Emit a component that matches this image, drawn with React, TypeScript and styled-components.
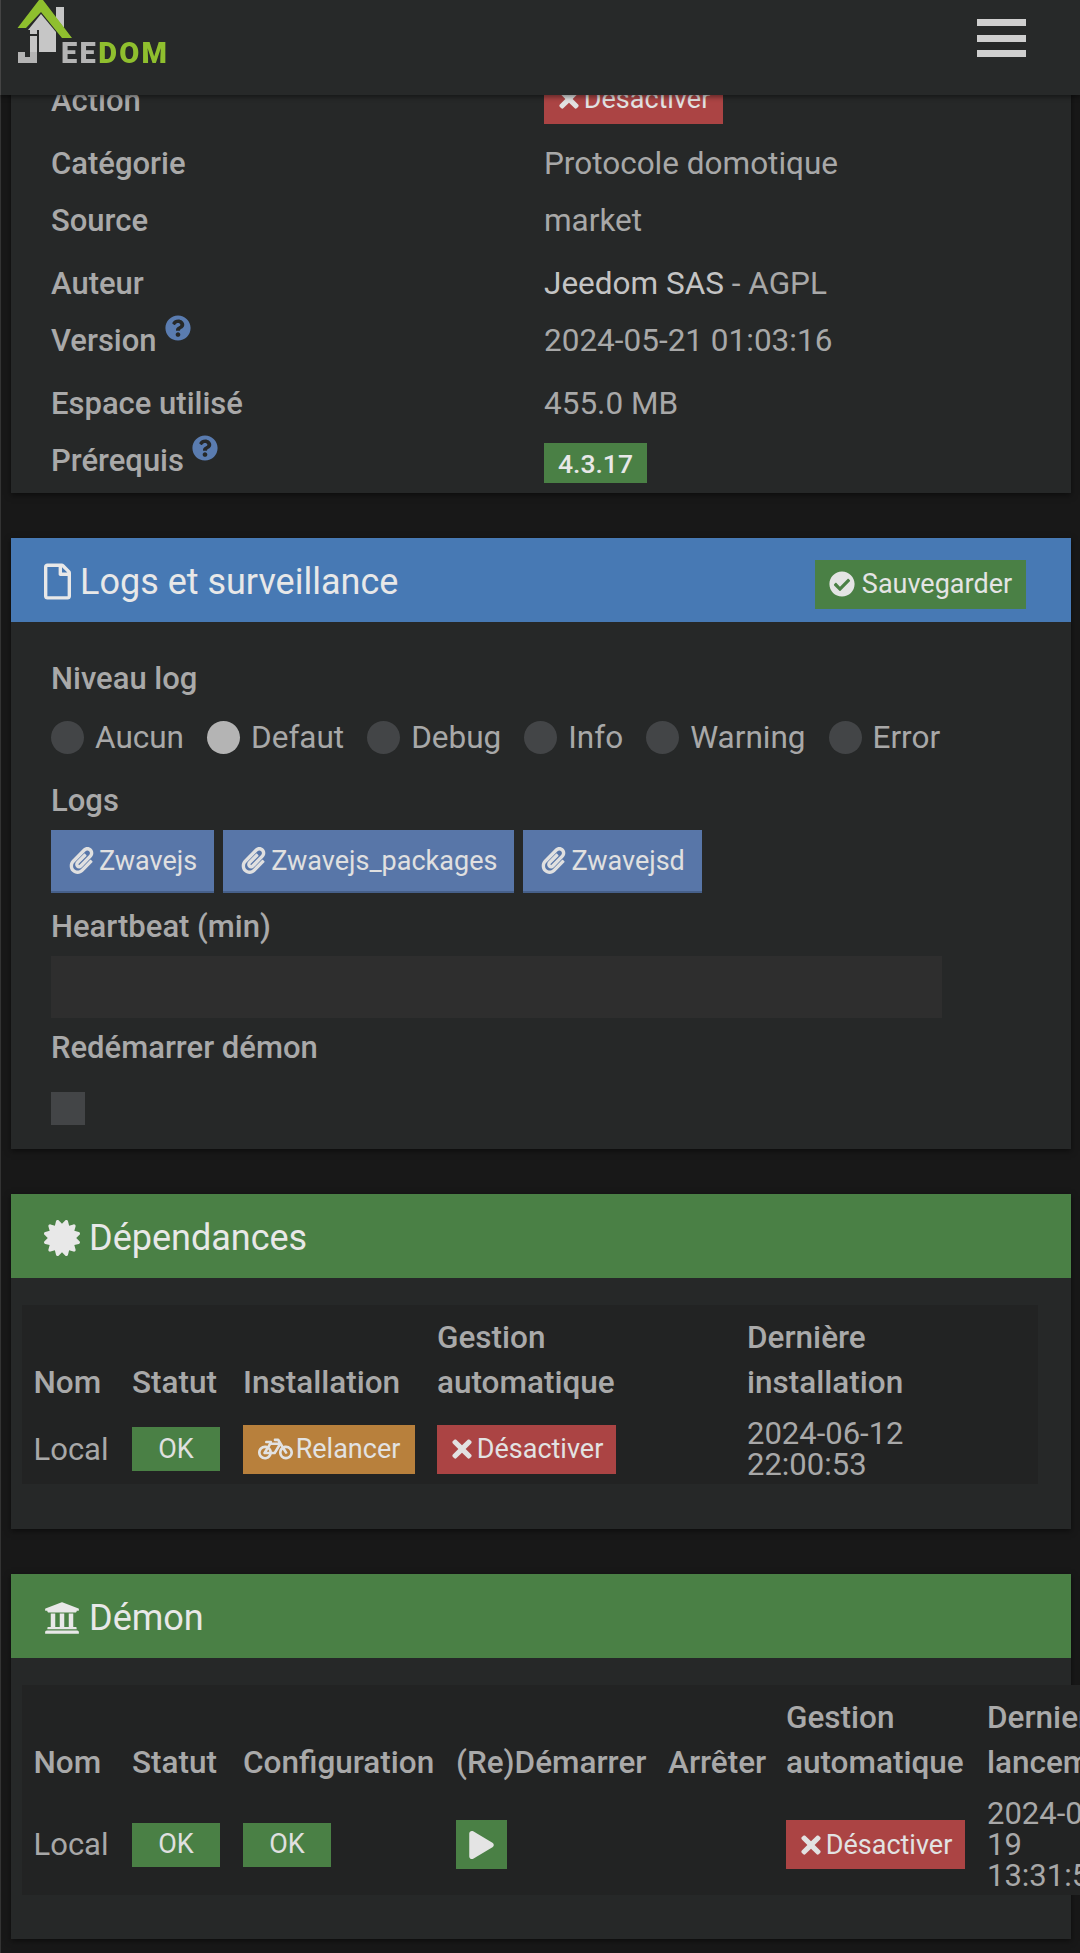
import { ReactNode } from 'react';
import styled, { createGlobalStyle } from 'styled-components';
import {
  FaBicycle,
  FaCertificate,
  FaCheckCircle,
  FaPaperclip,
  FaPlay,
  FaQuestionCircle,
  FaRegFile,
  FaTimes,
  FaUniversity,
} from 'react-icons/fa';

const GlobalStyle = createGlobalStyle`
  html, body {
    margin: 0;
    padding: 0;
    background: #181818;
    overflow: hidden;
  }
  body {
    font-family: Roboto, 'Liberation Sans', sans-serif;
    font-size: 31.5px;
    color: #a8a8a8;
  }
  * { box-sizing: border-box; }
`;

const Page = styled.div`
  width: 1080px;
  height: 1953px;
  overflow: hidden;
  border-left: 1px solid #333;
`;

const TopBar = styled.header`
  position: fixed;
  top: 0;
  left: 0;
  right: 0;
  height: 95px;
  z-index: 10;
  background: #272929;
  box-shadow: 0 2px 5px rgba(0, 0, 0, 0.45);
  border-left: 1px solid #444;
  display: flex;
  justify-content: space-between;
  align-items: flex-start;
  padding: 0 54px 0 0;
`;

const Burger = styled.div`
  margin-top: 19px;
  width: 49px;
  display: flex;
  flex-direction: column;
  gap: 8.5px;

  span {
    height: 7px;
    background: #cfcfcf;
  }
`;

const Main = styled.main`
  padding: 0 9px 0 10px;
  display: flex;
  flex-direction: column;
  gap: 45px;
`;

const Panel = styled.section`
  background: #262828;
  box-shadow: 0 2px 6px rgba(0, 0, 0, 0.5);
`;

const InfoBody = styled.div`
  padding: 78px 40px 11px;
`;

const InfoRow = styled.div<{ $gap: number }>`
  height: 44px;
  margin-bottom: ${p => p.$gap}px;
  display: grid;
  grid-template-columns: 493px 1fr;
  grid-template-rows: 44px;
  align-items: center;
`;

const Label = styled.label`
  font-size: 31px;
  font-weight: 500;
  color: #a9a9a9;
  display: flex;
  align-items: flex-start;
`;

const Help = styled(FaQuestionCircle)`
  width: 26px;
  height: 26px;
  color: #5a7cb0;
  margin: -7px 0 0 8px;
`;

const Author = styled.span`
  color: #c4c4c4;
`;

const Heading = styled.div<{ $color: string }>`
  height: 84px;
  background: ${p => p.$color};
  color: #e8e8e8;
  font-size: 36px;
  display: flex;
  align-items: center;
  justify-content: space-between;
  padding: 0 45px 0 33px;
`;

const HeadingTitle = styled.h3`
  margin: 3px 0 0;
  font-size: inherit;
  font-weight: 400;
  display: flex;
  align-items: center;
  gap: 9px;
  svg {
    width: 36px;
    height: 36px;
    flex: none;
  }
`;

const FileIcon = styled(FaRegFile)`
  && {
    width: 27px;
    height: 37px;
  }
`;

const SaveButton = styled.button`
  margin-top: 8px;
  height: 49px;
  width: 211px;
  border: 0;
  background: #4a8045;
  color: #e4e4e4;
  font: 400 27px Roboto, sans-serif;
  display: flex;
  align-items: center;
  justify-content: center;
  gap: 7px;
  padding: 0;
  svg {
    width: 26px;
    height: 26px;
  }
`;

const LogsBody = styled.div`
  padding: 35px 40px 24px;
`;

const FieldLabel = styled(Label)`
  height: 44px;
  align-items: center;
  padding-bottom: 2px;
`;

const RadioLine = styled.div`
  display: flex;
  height: 58px;
  margin-top: 7px;
  margin-bottom: 13px;
  align-items: center;
  gap: 23px;
`;

const RadioItem = styled.span`
  display: flex;
  align-items: center;
  gap: 11px;
`;

const RadioDot = styled.span<{ $on?: boolean }>`
  width: 33px;
  height: 33px;
  border-radius: 50%;
  background: ${p => (p.$on ? '#b4b4b4' : '#434547')};
`;

const LogButtons = styled.div`
  display: flex;
  gap: 9px;
  margin: 7px 0 12px;
`;

const LogButton = styled.button`
  height: 63px;
  border: 0;
  border-bottom: 2px solid #46608a;
  background: #5876a8;
  color: #e0e0e0;
  font: 400 27px Roboto, sans-serif;
  padding: 0 17px;
  display: flex;
  align-items: center;
  gap: 4px;
  svg {
    width: 27px;
    height: 27px;
  }
`;

const TextInput = styled.div`
  width: 891px;
  height: 62px;
  background: #2e2e2e;
  margin: 7px 0 8px;
`;

const CheckBox = styled.div`
  width: 34px;
  height: 33px;
  background: #434547;
  margin-top: 22px;
`;

const TableBody = styled.div<{ $bottom: number }>`
  padding: 27px 0 ${p => p.$bottom}px 11px;
`;

const DataTable = styled.table<{ $width: number }>`
  table-layout: fixed;
  width: ${p => p.$width}px;
  border-collapse: collapse;
  background: #222323;
`;

const Col = styled.col<{ $w: number }>`
  width: ${p => p.$w}px;
`;

const Th = styled.th`
  text-align: left;
  vertical-align: bottom;
  font-weight: 500;
  color: #a9a9a9;
  line-height: 45px;
  padding: 10px 11.5px 9px;
  white-space: nowrap;
`;

const Td = styled.td`
  vertical-align: middle;
  color: #a8a8a8;
  font-size: 31px;
  line-height: 31px;
  padding: 4px 11.5px;
`;

const StateBadge = styled.span`
  display: flex;
  width: 88px;
  height: 44px;
  align-items: center;
  justify-content: center;
  background: #4a8045;
  color: #e0e0e0;
  font-size: 27px;
`;

const ActionButton = styled.button<{ $color: string; $width: number }>`
  width: ${p => p.$width}px;
  height: 49px;
  border: 0;
  padding: 0;
  background: ${p => p.$color};
  color: #e2e2e2;
  font: 400 27px Roboto, sans-serif;
  display: flex;
  align-items: center;
  justify-content: center;
  gap: 3px;
  white-space: nowrap;
`;

const TopButton = styled(ActionButton)`
  margin-bottom: 2px;
`;

const VersionBadge = styled.span`
  display: inline-flex;
  margin-top: 6px;
  width: 103px;
  height: 40px;
  align-items: center;
  justify-content: center;
  background: #4a8045;
  color: #e8e8e8;
  font-size: 26.5px;
  font-weight: 500;
`;

const PlayButton = styled.button`
  width: 51px;
  height: 49px;
  border: 0;
  padding: 0;
  background: #4a8045;
  color: #e4e4e4;
  display: flex;
  align-items: center;
  justify-content: center;
  svg {
    width: 25px;
    height: 28px;
  }
`;

const SmallX = styled(FaTimes)`
  width: 24px;
  height: 28px;
`;

const Bike = styled(FaBicycle)`
  width: 35px;
  height: 30px;
`;

function Logo() {
  return (
    <svg width="170" height="66" viewBox="0 0 170 66">
      <path d="M55 7 H63 V28 L55 18 Z" fill="#c6c6c6" />
      <path d="M27 30 L40 14 L55 32 V52 H27 Z" fill="#c6c6c6" />
      <path d="M26 30 H38 V54 H26 Z" fill="#272929" />
      <rect x="29" y="29" width="7" height="5" fill="#c6c6c6" />
      <rect x="29" y="36" width="7" height="16" fill="#c6c6c6" />
      <path d="M17 52 H24 V57 H29 V52 H36 V63 H17 Z" fill="#b4b4b4" />
      <path d="M16.5 28 L38 0 H42 L71 38 H61 L40 12 L25 28 Z" fill="#8fbf2e" />
      <text
        x="60"
        y="63"
        textLength="106"
        fontFamily="Roboto, sans-serif"
        fontWeight="900"
        fontSize="29"
        fill="#b4b4b4"
      >
        EE
        <tspan fill="#8fbf2e">DOM</tspan>
      </text>
    </svg>
  );
}

function Radio({ on, children }: { on?: boolean; children: ReactNode }) {
  return (
    <RadioItem>
      <RadioDot $on={on} />
      {children}
    </RadioItem>
  );
}

const LOG_LEVELS = ['Aucun', 'Defaut', 'Debug', 'Info', 'Warning', 'Error'];
const LOG_FILES = ['Zwavejs', 'Zwavejs_packages', 'Zwavejsd'];

export default function App() {
  return (
    <Page>
      <GlobalStyle />
      <TopBar>
        <Logo />
        <Burger>
          <span />
          <span />
          <span />
        </Burger>
      </TopBar>

      <Main>
        <Panel>
          <InfoBody>
            <InfoRow $gap={19}>
              <Label>Action</Label>
              <div>
                <TopButton $color="#ab4444" $width={179}>
                  <SmallX /> Désactiver
                </TopButton>
              </div>
            </InfoRow>
            <InfoRow $gap={13}>
              <Label>Catégorie</Label>
              <span>Protocole domotique</span>
            </InfoRow>
            <InfoRow $gap={19}>
              <Label>Source</Label>
              <span>market</span>
            </InfoRow>
            <InfoRow $gap={13}>
              <Label>Auteur</Label>
              <span>
                <Author>Jeedom SAS</Author> - AGPL
              </span>
            </InfoRow>
            <InfoRow $gap={19}>
              <Label>
                Version <Help />
              </Label>
              <span>2024-05-21 01:03:16</span>
            </InfoRow>
            <InfoRow $gap={13}>
              <Label>Espace utilisé</Label>
              <span>455.0 MB</span>
            </InfoRow>
            <InfoRow $gap={0}>
              <Label>
                Prérequis <Help />
              </Label>
              <div>
                <VersionBadge>4.3.17</VersionBadge>
              </div>
            </InfoRow>
          </InfoBody>
        </Panel>

        <Panel>
          <Heading $color="#4779b4">
            <HeadingTitle>
              <FileIcon /> Logs et surveillance
            </HeadingTitle>
            <SaveButton>
              <FaCheckCircle /> Sauvegarder
            </SaveButton>
          </Heading>
          <LogsBody>
            <FieldLabel>Niveau log</FieldLabel>
            <RadioLine>
              {LOG_LEVELS.map(level => (
                <Radio key={level} on={level === 'Defaut'}>
                  {level}
                </Radio>
              ))}
            </RadioLine>
            <FieldLabel>Logs</FieldLabel>
            <LogButtons>
              {LOG_FILES.map(file => (
                <LogButton key={file}>
                  <FaPaperclip /> {file}
                </LogButton>
              ))}
            </LogButtons>
            <FieldLabel>Heartbeat (min)</FieldLabel>
            <TextInput />
            <FieldLabel>Redémarrer démon</FieldLabel>
            <CheckBox />
          </LogsBody>
        </Panel>

        <Panel>
          <Heading $color="#4a8045">
            <HeadingTitle>
              <FaCertificate /> Dépendances
            </HeadingTitle>
          </Heading>
          <TableBody $bottom={45}>
            <DataTable $width={1016}>
              <colgroup>
                <Col $w={98.5} />
                <Col $w={111} />
                <Col $w={194} />
                <Col $w={310} />
                <Col $w={302.5} />
              </colgroup>
              <thead>
                <tr>
                  <Th>Nom</Th>
                  <Th>Statut</Th>
                  <Th>Installation</Th>
                  <Th>
                    Gestion
                    <br />
                    automatique
                  </Th>
                  <Th>
                    Dernière
                    <br />
                    installation
                  </Th>
                </tr>
              </thead>
              <tbody>
                <tr>
                  <Td>Local</Td>
                  <Td>
                    <StateBadge>OK</StateBadge>
                  </Td>
                  <Td>
                    <ActionButton $color="#b8803c" $width={172}>
                      <Bike /> Relancer
                    </ActionButton>
                  </Td>
                  <Td>
                    <ActionButton $color="#ab4444" $width={179}>
                      <SmallX /> Désactiver
                    </ActionButton>
                  </Td>
                  <Td>
                    2024-06-12
                    <br />
                    22:00:53
                  </Td>
                </tr>
              </tbody>
            </DataTable>
          </TableBody>
        </Panel>

        <Panel>
          <Heading $color="#4a8045">
            <HeadingTitle>
              <FaUniversity /> Démon
            </HeadingTitle>
          </Heading>
          <TableBody $bottom={44}>
            <DataTable $width={1101}>
              <colgroup>
                <Col $w={98.5} />
                <Col $w={111} />
                <Col $w={213} />
                <Col $w={212} />
                <Col $w={118} />
                <Col $w={201} />
                <Col $w={147.5} />
              </colgroup>
              <thead>
                <tr>
                  <Th>Nom</Th>
                  <Th>Statut</Th>
                  <Th>Configuration</Th>
                  <Th>(Re)Démarrer</Th>
                  <Th>Arrêter</Th>
                  <Th>
                    Gestion
                    <br />
                    automatique
                  </Th>
                  <Th>
                    Dernier
                    <br />
                    lancement
                  </Th>
                </tr>
              </thead>
              <tbody>
                <tr>
                  <Td>Local</Td>
                  <Td>
                    <StateBadge>OK</StateBadge>
                  </Td>
                  <Td>
                    <StateBadge>OK</StateBadge>
                  </Td>
                  <Td>
                    <PlayButton>
                      <FaPlay />
                    </PlayButton>
                  </Td>
                  <Td />
                  <Td>
                    <ActionButton $color="#ab4444" $width={179}>
                      <SmallX /> Désactiver
                    </ActionButton>
                  </Td>
                  <Td>2024-05-19 13:31:52</Td>
                </tr>
              </tbody>
            </DataTable>
          </TableBody>
        </Panel>
      </Main>
    </Page>
  );
}
